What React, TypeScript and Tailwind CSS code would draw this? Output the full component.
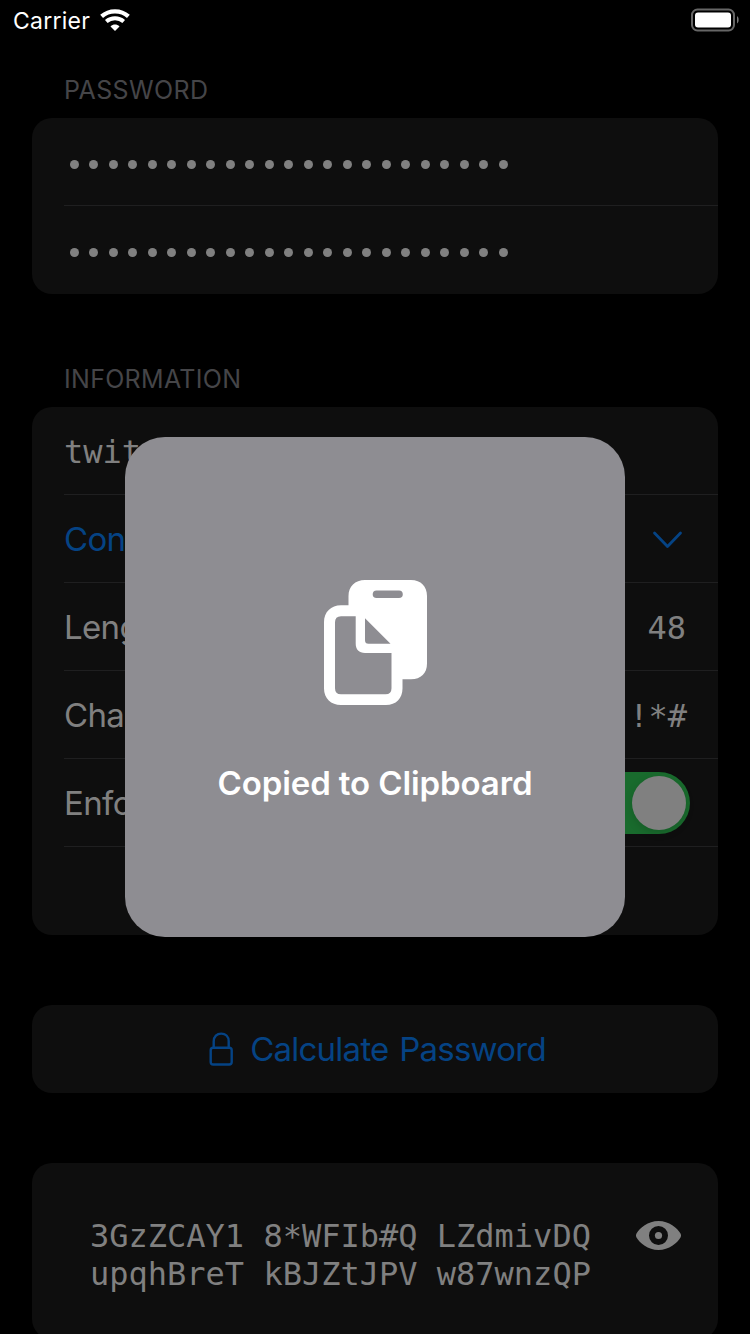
import type { ReactNode } from "react";

const mono = "font-['DejaVu_Sans_Mono','Liberation_Mono',monospace]";

function Dots() {
  return (
    <div className="flex h-[87px] items-center gap-[10.52px] pl-[37.5px] pt-[5px]">
      {Array.from({ length: 23 }, (_, i) => (
        <span key={i} className="size-[9px] shrink-0 rounded-full bg-[#808080]" />
      ))}
    </div>
  );
}

function Divider() {
  return <div className="ml-8 h-px bg-[#1f1f20]" />;
}

function Row({ children }: { children?: ReactNode }) {
  return (
    <>
      <div className="flex h-[87px] items-center justify-between pl-8 pr-8 text-[33px] text-[#808080]">
        {children}
      </div>
      <Divider />
    </>
  );
}

function SectionTitle({ children }: { children: ReactNode }) {
  return (
    <h2 className="flex h-8 items-center pl-8 text-[25px] leading-8 text-[#454548]">
      {children}
    </h2>
  );
}

function WifiIcon() {
  return (
    <svg width="30" height="22" viewBox="0 0 30 22" fill="none">
      <path d="M1.600 7.300C9.200.6 20.800.6 28.400 7.300" stroke="#fff" strokeWidth="4.300" />
      <path d="M6.300 12.500c4.900-4.300 12.500-4.300 17.400 0" stroke="#fff" strokeWidth="4" />
      <path d="M10.500 17.400c2.700-2.600 6.300-2.600 9 0L15 22Z" fill="#fff" />
    </svg>
  );
}

function BatteryIcon() {
  return (
    <svg width="50" height="24" viewBox="0 0 50 24">
      <rect x="2" y="1.500" width="42" height="21" rx="5.500" fill="none" stroke="#666" strokeWidth="2" />
      <rect x="5" y="4.500" width="36" height="15" rx="3" fill="#fff" />
      <path d="M47 8c2.200 1.400 2.200 6.100 0 7.500Z" fill="#777" />
    </svg>
  );
}

function CopyIcon() {
  return (
    <svg className="ml-0.5" width="104" height="126" viewBox="0 0 104 126">
      <path
        fill="#fff"
        fillRule="evenodd"
        d="M41 0H87C97 0 103 6.500 103 16V83.500C103 93.500 97 99.200 87 99.200H78.500V108.500C78.500 118.500 72 125 62 125H17C7 125 0 118.500 0 108.500V42C0 32 7 25.200 17 25.200H24.500V16C24.500 6.500 31 0 41 0ZM52.500 10.500A3.800 3.800 0 0 0 52.500 18.100H75A3.800 3.800 0 0 0 75 10.500ZM17 36.200Q11 36.200 11 42.200V108.200Q11 114.200 17 114.200H61.500Q67.500 114.200 67.500 108.200V73H41C35 73 31.700 69.500 31.700 63.500V36.200ZM41 38.200V60.200Q41 63.700 44.500 63.700H66.500Z"
      />
    </svg>
  );
}

function LockIcon() {
  return (
    <svg width="26" height="34" viewBox="0 0 26 34" fill="none" stroke="#054384" strokeWidth="2.400">
      <rect x="2.700" y="15.700" width="21" height="16.800" rx="2.500" />
      <path d="M5.700 15.500V9.500C5.700 4.500 9 1.600 13.200 1.600S20.700 4.500 20.700 9.500V15.500" />
    </svg>
  );
}

function EyeIcon() {
  return (
    <svg width="45" height="29" viewBox="0 0 45 29">
      <path
        fill="#808080"
        fillRule="evenodd"
        d="M22.500 0C33 0 41.500 7 44.500 12.500Q45.500 14.500 44.500 16.500C41.500 22 33 29 22.500 29S3.500 22 .5 16.500Q-.5 14.500 .5 12.500C3.500 7 12 0 22.500 0ZM22.500 5A9.500 9.500 0 1 0 22.500 24A9.500 9.500 0 1 0 22.500 5Z"
      />
      <circle cx="22.500" cy="14.500" r="3.600" fill="#808080" />
    </svg>
  );
}

export default function App() {
  return (
    <div className="relative h-[1334px] w-[750px] overflow-hidden bg-black font-['Inter',sans-serif]">
      <header className="flex h-10 items-center justify-between pl-[13px] pr-[10px]">
        <div className="flex items-center gap-[10px]">
          <span className="pt-0.5 text-[23px] leading-10 tracking-[0.25px] text-white">Carrier</span>
          <WifiIcon />
        </div>
        <BatteryIcon />
      </header>

      <main className="px-8 pt-[34px]">
        <SectionTitle>
          <span className="tracking-[0.4px]">PASSWORD</span>
        </SectionTitle>
        <section className="mt-3 h-44 rounded-[20px] bg-[#0e0e0e]">
          <Dots />
          <Divider />
          <Dots />
        </section>

        <div className="mt-[69px]">
          <SectionTitle>
            <span className="tracking-[0.3px]">INFORMATION</span>
          </SectionTitle>
        </div>
        <section className="mt-3 h-[528px] rounded-[20px] bg-[#0e0e0e]">
          <Row>
            <span className={`${mono} pt-0.5 text-[32px]`}>twit</span>
          </Row>
          <Row>
            <span className="pt-0.5 tracking-[-0.65px] text-[#054384]">Con</span>
            <svg className="mt-0.5" width="38" height="24" viewBox="0 0 38 24" fill="none">
              <path d="M6.500 5 19.500 18.500 32.500 5" stroke="#054384" strokeWidth="2.800" strokeLinecap="round" strokeLinejoin="round" />
            </svg>
          </Row>
          <Row>
            <span className="pt-0.5 tracking-[-0.65px]">Leng</span>
            <span className={`${mono} pt-0.5 text-[32px]`}>48</span>
          </Row>
          <Row>
            <span className="pt-0.5 tracking-[-0.65px]">Cha</span>
            <span className={`${mono} -mr-px pt-0.5 text-[32px]`}>!*#</span>
          </Row>
          <Row>
            <span className="pt-0.5 tracking-[-0.65px]">Enfo</span>
            <span className="-mr-1 flex h-[62px] w-[102px] items-center justify-end rounded-full bg-[#196b2d] pr-1">
              <span className="size-[54px] rounded-full bg-[#808080] shadow-[0_3px_8px_rgba(0,0,0,0.15)]" />
            </span>
          </Row>
        </section>

        <button className="mt-[70px] flex h-[88px] w-full items-center justify-center gap-4 rounded-[20px] bg-[#0e0e0e] pl-1 text-[33px] text-[#054384]">
          <LockIcon />
          <span className="pt-0.5 tracking-[-0.75px] [word-spacing:2px]">Calculate Password</span>
        </button>

        <section className="mt-[70px] flex h-[176px] justify-between rounded-[20px] bg-[#0e0e0e] pl-[58px] pr-[37px]">
          <p className={`${mono} whitespace-pre pt-[54px] text-[32px] leading-[38px] text-[#808080]`}>
            {"3GzZCAY1 8*WFIb#Q LZdmivDQ\nupqhBreT kBJZtJPV w87wnzQP"}
          </p>
          <div className="pt-[57.500px]">
            <EyeIcon />
          </div>
        </section>
      </main>

      <div
        role="status"
        className="absolute left-[125px] top-[437px] flex size-[500px] flex-col items-center rounded-[40px] bg-[#8e8d92] pt-[143px]"
      >
        <CopyIcon />
        <p className="mt-[57px] whitespace-nowrap text-[33px] font-semibold leading-10 tracking-[-0.1px] text-white">
          Copied to Clipboard
        </p>
      </div>
    </div>
  );
}
